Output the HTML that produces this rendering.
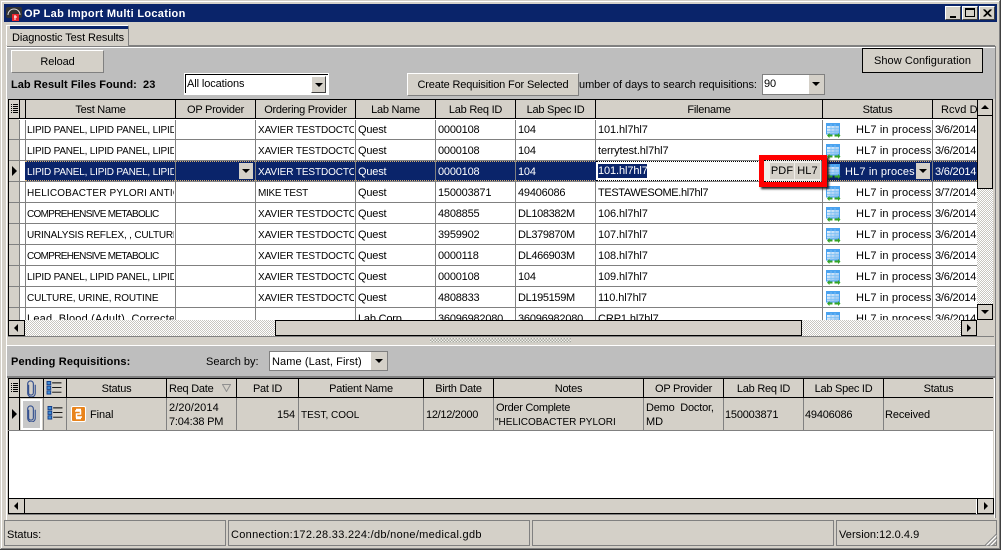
<!DOCTYPE html>
<html><head><meta charset="utf-8">
<style>
html,body{margin:0;padding:0;width:1001px;height:550px;overflow:hidden;background:#d4d0c8}
body{position:relative;font:11px/14px "Liberation Sans",sans-serif;letter-spacing:-.1px;color:#000}
div,span.a{position:absolute;box-sizing:border-box}
.t{position:absolute;white-space:pre;overflow:hidden;margin-top:1px}
.h{position:absolute;text-align:center;white-space:pre;overflow:hidden;top:0;height:18px;line-height:20px;letter-spacing:-.25px}
.btn{background:#d4d0c8;text-align:center;white-space:pre}
.raised{border:1px solid;border-color:#fff #808080 #808080 #fff}
.r{left:0;width:1001px;height:20px;line-height:20px}
.r .t{height:20px;margin-top:0}
.c1{left:27px;width:147px;font-size:10px;letter-spacing:-.2px}.c2{left:177px;width:76px}.c3{left:258px;width:96px;font-size:10px;letter-spacing:-.1px}.c4{left:358px;width:76px;letter-spacing:-.2px}
.r .c1,.r .c3{margin-top:1px}
.c5{left:438px;width:76px;letter-spacing:-.2px}.c6{left:518px;width:76px;letter-spacing:-.2px}.c7{left:598px;width:222px;letter-spacing:-.1px}.c8{left:856px;width:75px;letter-spacing:.15px}.c9{left:935px;width:42px;letter-spacing:-.2px}
.ic{position:absolute;left:826px;top:3px;width:15px;height:15px}
.v{top:0;width:1px;background:#808080}
.dn{width:0;height:0;border-left:4px solid transparent;border-right:4px solid transparent;border-top:4px solid #000}
.lt{width:0;height:0;border-top:4px solid transparent;border-bottom:4px solid transparent;border-right:4px solid #000}
.rt{width:0;height:0;border-top:4px solid transparent;border-bottom:4px solid transparent;border-left:4px solid #000}
.dither{background:repeating-conic-gradient(#c8c6c0 0 25%,#fff 0 50%) 0 0/2px 2px}
.b2{border:2px solid #000;background:#d4d0c8}
</style></head><body>
<svg width="0" height="0" style="position:absolute"><defs>
<linearGradient id="gf" x1="0" y1="0" x2="1" y2="1"><stop offset="0" stop-color="#ffffff"/><stop offset="1" stop-color="#7fb8ee"/></linearGradient>
<symbol id="gr" viewBox="0 0 15 15">
<rect x=".5" y=".5" width="13" height="10.500" fill="url(#gf)" stroke="#4aa3f0"/><rect x="1" y="1" width="12" height="2" fill="#4aa3f0"/>
<path d="M5 1v10M9 1v10M1 5.500h12M1 8.500h12" stroke="#7cc0f5" stroke-width=".8"/>
<path d="M1 12.500l2.500-2.500v1.500h3v2h-3V15zM14.500 12.500l-2.500-2.500v1.500H8.500v2H12V15z" fill="#35a426"/></symbol>
<symbol id="clip" viewBox="0 0 12 18"><path d="M3.500 5v8.500a2.500 2.500 0 0 0 5 0V4a3 3 0 0 0-6 0v10a4 4 0 0 0 8 0V5" fill="none" stroke="#34508f" stroke-width="1.200"/></symbol>
<symbol id="list" viewBox="0 0 16 15"><rect x=".5" y=".5" width="4" height="3.500" fill="#3f8fd8" stroke="#123a88"/><rect x=".5" y="5.500" width="4" height="3.500" fill="#3f8fd8" stroke="#123a88"/><rect x=".5" y="10.500" width="4" height="3.500" fill="#3f8fd8" stroke="#123a88"/><path d="M6 2h10M6 7h10M6 12h10" stroke="#000"/></symbol>
<symbol id="mini" viewBox="0 0 7 9"><path d="M0 .5h1M0 2.500h1M0 4.500h1M0 6.500h1M0 8.500h1M2 .5h5M2 2.500h5M2 4.500h5M2 6.500h5M2 8.500h5" stroke="#000"/></symbol>
</defs></svg>

<!-- window frame -->
<div style="left:1px;top:1px;width:999px;height:1px;background:#fff"></div>
<div style="left:1px;top:1px;width:1px;height:548px;background:#fff"></div>
<div style="left:1000px;top:0;width:1px;height:550px;background:#404040"></div>
<div style="left:999px;top:1px;width:1px;height:548px;background:#808080"></div>
<div style="left:0;top:549px;width:1001px;height:1px;background:#404040"></div>
<div style="left:1px;top:548px;width:999px;height:1px;background:#808080"></div>
<!-- title -->
<div style="left:4px;top:4px;width:993px;height:18px;background:#0a246a"></div>
<svg style="position:absolute;left:6px;top:6px" width="16" height="15" viewBox="0 0 16 15"><rect x="0" y="1" width="16" height="11" rx="2" fill="#333"/><path d="M2 9a6 6 0 0 1 12 0" fill="none" stroke="#ddd"/><rect x="6" y="8" width="7" height="7" fill="#e8242c"/><path d="M9 9v5M8 11h3" stroke="#fff"/></svg>
<div class="t" style="left:24px;top:6px;color:#fff;font-weight:bold;font-size:11px;letter-spacing:.3px">OP Lab Import Multi Location</div>
<div class="raised btn" style="left:945px;top:6px;width:16px;height:14px;border-color:#fff #404040 #404040 #fff"><div style="left:4px;top:9px;width:6px;height:2px;background:#000"></div></div>
<div class="raised btn" style="left:962px;top:6px;width:16px;height:14px;border-color:#fff #404040 #404040 #fff"><div style="left:2px;top:1px;width:10px;height:9px;border:1px solid #000;border-top-width:2px"></div></div>
<div class="raised btn" style="left:979px;top:6px;width:16px;height:14px;border-color:#fff #404040 #404040 #fff"><svg style="position:absolute;left:3px;top:2px" width="9" height="8"><path d="M0.500 0.500l7 7M1.500 0.500l7 7M7.500 0.500l-7 7M8.500 0.500l-7 7" stroke="#000"/></svg></div>

<!-- tab -->
<div style="left:6px;top:25px;width:123px;height:21px;background:#d4d0c8;border:1px solid;border-color:#fff #808080 #d4d0c8 #fff"></div>
<div style="left:10px;top:26px;width:118px;height:3px;background:#0a246a"></div>
<div class="t" style="left:12px;top:30px;letter-spacing:-.09px">Diagnostic Test Results</div>
<!-- main panel -->
<div style="left:6px;top:46px;width:990px;height:1px;background:#808080"></div>
<div style="left:128px;top:45px;width:867px;height:1px;background:#808080"></div>
<div style="left:6px;top:46px;width:1px;height:474px;background:#fff"></div>
<div style="left:995px;top:46px;width:1px;height:472px;background:#808080"></div>
<div style="left:7px;top:47px;width:988px;height:52px;background:#bebebe"></div>
<div style="left:7px;top:47px;width:988px;height:1px;background:#fff"></div>

<div class="btn raised" style="left:11px;top:50px;width:93px;height:23px;line-height:22px">Reload</div>
<div class="t" style="left:11px;top:77px;font-weight:bold;font-size:11px;letter-spacing:.05px">Lab Result Files Found:&nbsp; 23</div>
<div style="left:184px;top:73px;width:145px;height:22px;background:#fff"></div>
<div style="left:185px;top:74px;width:143px;height:1px;background:#000"></div><div style="left:185px;top:74px;width:1px;height:19px;background:#000"></div>
<div class="t" style="left:187px;top:76px">All locations</div>
<div class="btn" style="left:311px;top:76px;width:15px;height:17px;border:1px solid;border-color:#fff #404040 #404040 #fff"><div class="dn" style="left:3px;top:6px"></div></div>
<div class="btn raised" style="left:407px;top:73px;width:172px;height:23px;line-height:22px;letter-spacing:-.16px">Create Requisition For Selected</div>
<div class="t" style="left:579px;top:77px;width:180px;letter-spacing:-.05px">umber of days to search requisitions:</div>
<div style="left:762px;top:74px;width:63px;height:21px;background:#fff;border:1px solid #808080"></div>
<div class="t" style="left:764px;top:76px">90</div>
<div class="btn" style="left:809px;top:75px;width:15px;height:19px"><div class="dn" style="left:3px;top:7px"></div></div>
<div class="btn" style="left:862px;top:48px;width:121px;height:25px;border:1px solid #000;line-height:25px;letter-spacing:.06px">Show Configuration</div>

<!-- GRID 1 -->
<div style="left:8px;top:99px;width:985px;height:221px;background:#fff"></div>
<div style="left:8px;top:99px;width:985px;height:1px;background:#000"></div>
<div style="left:8px;top:99px;width:1px;height:238px;background:#000"></div>
<div style="left:9px;top:100px;width:968px;height:18px;background:#d4d0c8"></div>
<div style="left:8px;top:118px;width:969px;height:1px;background:#000"></div>
<div style="left:9px;top:119px;width:10px;height:201px;background:#d4d0c8"></div>
<div style="left:8px;top:100px;width:0;height:18px">
<div class="v" style="left:11px;height:18px;background:#000"></div>
<div class="v" style="left:17px;height:18px;background:#000"></div>
<div class="h" style="left:18px;width:149px">Test Name</div>
<div class="v" style="left:167px;height:18px;background:#000"></div>
<div class="h" style="left:168px;width:79px">OP Provider</div>
<div class="v" style="left:247px;height:18px;background:#000"></div>
<div class="h" style="left:248px;width:99px">Ordering Provider</div>
<div class="v" style="left:347px;height:18px;background:#000"></div>
<div class="h" style="left:348px;width:79px">Lab Name</div>
<div class="v" style="left:427px;height:18px;background:#000"></div>
<div class="h" style="left:428px;width:79px">Lab Req ID</div>
<div class="v" style="left:507px;height:18px;background:#000"></div>
<div class="h" style="left:508px;width:79px">Lab Spec ID</div>
<div class="v" style="left:587px;height:18px;background:#000"></div>
<div class="h" style="left:588px;width:226px">Filename</div>
<div class="v" style="left:814px;height:18px;background:#000"></div>
<div class="h" style="left:815px;width:109px">Status</div>
<div class="v" style="left:924px;height:18px;background:#000"></div>
<div class="h" style="left:925px;width:44px;text-align:left;padding-left:8px;letter-spacing:.1px">Rcvd Date</div>
</div>
<svg style="position:absolute;left:11px;top:104px" width="7" height="9"><use href="#mini"/></svg>

<!-- grid 1 body clipped -->
<div style="left:0;top:120px;width:977px;height:200px;overflow:hidden">
<div style="left:0;top:-1px;width:977px;height:201px">
<div class="v" style="left:19px;height:201px;background:#808080"></div>
<div class="v" style="left:25px;height:201px"></div><div class="v" style="left:175px;height:201px"></div><div class="v" style="left:255px;height:201px"></div><div class="v" style="left:355px;height:201px"></div><div class="v" style="left:435px;height:201px"></div><div class="v" style="left:515px;height:201px"></div><div class="v" style="left:595px;height:201px"></div><div class="v" style="left:822px;height:201px"></div><div class="v" style="left:932px;height:201px"></div>
<div style="left:9px;top:20px;width:968px;height:1px;background:#808080"></div>
<div style="left:9px;top:41px;width:968px;height:1px;background:#808080"></div>
<div style="left:9px;top:62px;width:968px;height:1px;background:#808080"></div>
<div style="left:9px;top:83px;width:968px;height:1px;background:#808080"></div>
<div style="left:9px;top:104px;width:968px;height:1px;background:#808080"></div>
<div style="left:9px;top:125px;width:968px;height:1px;background:#808080"></div>
<div style="left:9px;top:146px;width:968px;height:1px;background:#808080"></div>
<div style="left:9px;top:167px;width:968px;height:1px;background:#808080"></div>
<div style="left:9px;top:188px;width:968px;height:1px;background:#808080"></div>

<div class="r" style="top:1px"><span class="t c1">LIPID PANEL, LIPID PANEL, LIPID</span><span class="t c3">XAVIER TESTDOCTOR</span><span class="t c4">Quest</span><span class="t c5">0000108</span><span class="t c6">104</span><span class="t c7">101.hl7hl7</span><svg class="ic"><use href="#gr"/></svg><span class="t c8">HL7 in process</span><span class="t c9">3/6/2014</span></div>
<div class="r" style="top:22px"><span class="t c1">LIPID PANEL, LIPID PANEL, LIPID</span><span class="t c3">XAVIER TESTDOCTOR</span><span class="t c4">Quest</span><span class="t c5">0000108</span><span class="t c6">104</span><span class="t c7">terrytest.hl7hl7</span><svg class="ic"><use href="#gr"/></svg><span class="t c8">HL7 in process</span><span class="t c9">3/6/2014</span></div>
<div class="r" style="top:64px"><span class="t c1" style="letter-spacing:.15px">HELICOBACTER PYLORI ANTIGEN</span><span class="t c3" style="letter-spacing:-.3px">MIKE TEST</span><span class="t c4">Quest</span><span class="t c5">150003871</span><span class="t c6">49406086</span><span class="t c7" style="letter-spacing:-.37px">TESTAWESOME.hl7hl7</span><svg class="ic"><use href="#gr"/></svg><span class="t c8">HL7 in process</span><span class="t c9">3/7/2014</span></div>
<div class="r" style="top:85px"><span class="t c1" style="letter-spacing:-.7px">COMPREHENSIVE METABOLIC</span><span class="t c3">XAVIER TESTDOCTOR</span><span class="t c4">Quest</span><span class="t c5">4808855</span><span class="t c6" style="letter-spacing:-.35px">DL108382M</span><span class="t c7">106.hl7hl7</span><svg class="ic"><use href="#gr"/></svg><span class="t c8">HL7 in process</span><span class="t c9">3/6/2014</span></div>
<div class="r" style="top:106px"><span class="t c1">URINALYSIS REFLEX, , CULTURE</span><span class="t c3">XAVIER TESTDOCTOR</span><span class="t c4">Quest</span><span class="t c5">3959902</span><span class="t c6" style="letter-spacing:-.35px">DL379870M</span><span class="t c7">107.hl7hl7</span><svg class="ic"><use href="#gr"/></svg><span class="t c8">HL7 in process</span><span class="t c9">3/6/2014</span></div>
<div class="r" style="top:127px"><span class="t c1" style="letter-spacing:-.7px">COMPREHENSIVE METABOLIC</span><span class="t c3">XAVIER TESTDOCTOR</span><span class="t c4">Quest</span><span class="t c5">0000118</span><span class="t c6" style="letter-spacing:-.35px">DL466903M</span><span class="t c7">108.hl7hl7</span><svg class="ic"><use href="#gr"/></svg><span class="t c8">HL7 in process</span><span class="t c9">3/6/2014</span></div>
<div class="r" style="top:148px"><span class="t c1">LIPID PANEL, LIPID PANEL, LIPID</span><span class="t c3">XAVIER TESTDOCTOR</span><span class="t c4">Quest</span><span class="t c5">0000108</span><span class="t c6">104</span><span class="t c7">109.hl7hl7</span><svg class="ic"><use href="#gr"/></svg><span class="t c8">HL7 in process</span><span class="t c9">3/6/2014</span></div>
<div class="r" style="top:169px"><span class="t c1" style="letter-spacing:-.1px">CULTURE, URINE, ROUTINE</span><span class="t c3">XAVIER TESTDOCTOR</span><span class="t c4">Quest</span><span class="t c5">4808833</span><span class="t c6" style="letter-spacing:-.35px">DL195159M</span><span class="t c7">110.hl7hl7</span><svg class="ic"><use href="#gr"/></svg><span class="t c8">HL7 in process</span><span class="t c9">3/6/2014</span></div>
<div class="r" style="top:190px"><span class="t c1" style="font-size:11px;letter-spacing:.2px;margin-top:0">Lead, Blood (Adult), Corrected</span><span class="t c4">Lab Corp</span><span class="t c5">36096982080</span><span class="t c6">36096982080</span><span class="t c7">CRP1.hl7hl7</span><svg class="ic"><use href="#gr"/></svg><span class="t c8">HL7 in process</span><span class="t c9">3/6/2014</span></div>

<!-- selected -->
<div style="left:25px;top:42px;width:952px;height:20px;background:#0a246a;border-top:1px dotted #d8b070;border-bottom:1px dotted #d8b070"></div>
<div class="v" style="left:175px;top:42px;height:20px"></div><div class="v" style="left:255px;top:42px;height:20px"></div><div class="v" style="left:355px;top:42px;height:20px"></div><div class="v" style="left:435px;top:42px;height:20px"></div><div class="v" style="left:515px;top:42px;height:20px"></div><div class="v" style="left:932px;top:42px;height:20px"></div>
<div class="r" style="top:43px;color:#fff"><span class="t c1">LIPID PANEL, LIPID PANEL, LIPID</span><span class="t c3">XAVIER TESTDOCTOR</span><span class="t c4">Quest</span><span class="t c5">0000108</span><span class="t c6">104</span><span class="t" style="left:845px;width:70px;letter-spacing:.15px">HL7 in process</span><span class="t c9">3/6/2014</span></div>
<div class="btn" style="left:239px;top:44px;width:14px;height:16px"><div class="dn" style="left:3px;top:6px"></div></div>
<div class="btn" style="left:916px;top:44px;width:14px;height:16px"><div class="dn" style="left:3px;top:6px"></div></div>
<div style="left:596px;top:42px;width:226px;height:20px;background:#fff;border-top:1px dotted #000;border-bottom:1px dotted #000"></div>
<div class="t" style="left:598px;top:44px;width:49px;height:14px;background:#0a246a;color:#fff;letter-spacing:-.1px">101.hl7hl7</div>
<svg class="ic" style="top:45px"><use href="#gr"/></svg>
<div class="rt" style="left:12px;top:47px;border-top-width:5px;border-bottom-width:5px;border-left-width:5px"></div>
</div>
</div>

<!-- red highlight -->
<div style="left:759px;top:155px;width:68px;height:32px;border:5px solid #f00;background:#fff;box-shadow:2px 2px 2px #222"></div>
<div style="left:764px;top:160px;width:58px;height:22px;border-top:1px dotted #000;border-bottom:1px dotted #000;border-right:1px solid #808080;background:#eeece8"></div>
<div class="btn" style="left:770px;top:163px;width:24px;height:16px;line-height:17px;background:#d4d0c8;letter-spacing:.1px">PDF</div>
<div class="btn" style="left:795px;top:163px;width:25px;height:16px;line-height:17px;background:#d4d0c8;letter-spacing:.1px">HL7</div>

<!-- v scrollbar grid 1 -->
<div class="dither" style="left:977px;top:99px;width:16px;height:221px"></div>
<div class="b2" style="left:977px;top:99px;width:16px;height:17px;border-width:1px"><div class="dn" style="left:3px;top:5px;border-top:0;border-bottom:4px solid #000"></div></div>
<div class="b2" style="left:977px;top:115px;width:16px;height:74px;border-width:1px"></div>
<div class="b2" style="left:977px;top:304px;width:16px;height:16px;border-width:1px"><div class="dn" style="left:3px;top:5px"></div></div>
<!-- h scrollbar grid 1 -->
<div class="dither" style="left:9px;top:320px;width:968px;height:16px"></div>
<div class="b2" style="left:8px;top:320px;width:17px;height:16px;border-width:1px"><div class="lt" style="left:5px;top:3px"></div></div>
<div class="b2" style="left:275px;top:320px;width:527px;height:16px;border-width:1px"></div>
<div class="b2" style="left:961px;top:320px;width:16px;height:16px;border-width:1px"><div class="rt" style="left:5px;top:3px"></div></div>
<div style="left:977px;top:320px;width:16px;height:16px;background:#d4d0c8"></div>
<div style="left:8px;top:336px;width:986px;height:1px;background:#808080"></div>

<!-- splitter -->
<div style="left:7px;top:337px;width:988px;height:8px;background:#d4d0c8"></div>
<div style="left:430px;top:338px;width:141px;height:5px;background:repeating-conic-gradient(#a8a8a0 0 25%,#eeeee8 0 50%) 0 0/3px 3px"></div>
<div style="left:7px;top:345px;width:988px;height:1px;background:#fff"></div>

<!-- pending panel -->
<div style="left:7px;top:346px;width:988px;height:30px;background:#bebebe"></div>
<div style="left:7px;top:376px;width:988px;height:2px;background:#808080"></div>
<div class="t" style="left:11px;top:354px;font-weight:bold;letter-spacing:.16px">Pending Requisitions:</div>
<div class="t" style="left:206px;top:354px;letter-spacing:0">Search by:</div>
<div style="left:269px;top:351px;width:119px;height:20px;background:#fff;border:1px solid #808080"></div>
<div class="t" style="left:272px;top:354px;letter-spacing:.1px">Name (Last, First)</div>
<div class="btn" style="left:371px;top:352px;width:16px;height:18px"><div class="dn" style="left:4px;top:7px"></div></div>

<!-- GRID 2 -->
<div style="left:8px;top:378px;width:985px;height:120px;background:#fff"></div>
<div style="left:8px;top:378px;width:985px;height:1px;background:#000"></div>
<div style="left:8px;top:378px;width:1px;height:136px;background:#000"></div>
<div style="left:9px;top:379px;width:984px;height:18px;background:#d4d0c8"></div>
<div style="left:9px;top:398px;width:984px;height:32px;background:#d4d0c8"></div>
<div style="left:8px;top:397px;width:985px;height:1px;background:#000"></div>
<div style="left:8px;top:430px;width:985px;height:1px;background:#808080"></div>
<div style="left:0;top:379px;width:0;height:18px">
<div class="v" style="left:19px;height:18px;background:#000"></div>
<div class="v" style="left:43px;height:18px;background:#000"></div>
<div class="v" style="left:66px;height:18px;background:#000"></div>
<div class="h" style="left:67px;width:99px">Status</div>
<div class="v" style="left:166px;height:18px;background:#000"></div>
<div class="h" style="left:169px;width:60px;text-align:left">Req Date</div>
<div class="v" style="left:236px;height:18px;background:#000"></div>
<div class="h" style="left:237px;width:61px">Pat ID</div>
<div class="v" style="left:298px;height:18px;background:#000"></div>
<div class="h" style="left:299px;width:124px">Patient Name</div>
<div class="v" style="left:423px;height:18px;background:#000"></div>
<div class="h" style="left:424px;width:69px">Birth Date</div>
<div class="v" style="left:493px;height:18px;background:#000"></div>
<div class="h" style="left:494px;width:149px">Notes</div>
<div class="v" style="left:643px;height:18px;background:#000"></div>
<div class="h" style="left:644px;width:79px">OP Provider</div>
<div class="v" style="left:723px;height:18px;background:#000"></div>
<div class="h" style="left:724px;width:79px">Lab Req ID</div>
<div class="v" style="left:803px;height:18px;background:#000"></div>
<div class="h" style="left:804px;width:79px">Lab Spec ID</div>
<div class="v" style="left:883px;height:18px;background:#000"></div>
<div class="h" style="left:884px;width:109px">Status</div>
</div>
<svg style="position:absolute;left:25px;top:380px" width="12" height="17"><use href="#clip"/></svg>
<svg style="position:absolute;left:11px;top:383px" width="7" height="9"><use href="#mini"/></svg>
<svg style="position:absolute;left:46px;top:381px" width="16" height="14"><use href="#list"/></svg>
<svg style="position:absolute;left:222px;top:384px" width="9" height="8"><path d="M.5.5h8L4.500 7.500z" fill="none" stroke="#909090"/></svg>
<!-- grid 2 row -->
<div style="left:0;top:398px;width:0;height:32px">
<div class="v" style="left:19px;height:32px;background:#000"></div>
<div class="v" style="left:43px;height:32px"></div><div class="v" style="left:66px;height:32px"></div><div class="v" style="left:166px;height:32px"></div><div class="v" style="left:236px;height:32px"></div><div class="v" style="left:298px;height:32px"></div><div class="v" style="left:423px;height:32px"></div><div class="v" style="left:493px;height:32px"></div><div class="v" style="left:643px;height:32px"></div><div class="v" style="left:723px;height:32px"></div><div class="v" style="left:803px;height:32px"></div><div class="v" style="left:883px;height:32px"></div>
</div>
<div class="rt" style="left:12px;top:409px;border-top-width:5px;border-bottom-width:5px;border-left-width:5px"></div>
<div style="left:21px;top:399px;width:21px;height:31px;background:#c8c8c8;border:2px solid #fff"></div>
<svg style="position:absolute;left:25px;top:405px" width="12" height="17"><use href="#clip"/></svg>
<svg style="position:absolute;left:47px;top:406px" width="16" height="14"><use href="#list"/></svg>
<div style="left:71px;top:406px;width:15px;height:16px;background:#e9841c;border:1px solid #fff;border-radius:2px"></div>
<svg style="position:absolute;left:74px;top:408px" width="9" height="12"><path d="M1 3h5.500V6H2.500V9H8M2 1.500h5M2 10.500h5" fill="none" stroke="#fff" stroke-width="1.500"/></svg>
<div class="t" style="left:90px;top:407px">Final</div>
<div class="t" style="left:169px;top:400px;letter-spacing:.1px">2/20/2014</div>
<div class="t" style="left:169px;top:414px;letter-spacing:-.2px">7:04:38 PM</div>
<div class="t" style="left:237px;top:407px;width:58px;text-align:right">154</div>
<div class="t" style="left:301px;top:408px;font-size:10px;letter-spacing:0">TEST, COOL</div>
<div class="t" style="left:426px;top:407px;letter-spacing:-.3px">12/12/2000</div>
<div class="t" style="left:496px;top:400px;letter-spacing:-.3px">Order Complete</div>
<div class="t" style="left:495px;top:415px;width:147px;font-size:10px;letter-spacing:0">"HELICOBACTER PYLORI</div>
<div class="t" style="left:646px;top:400px;letter-spacing:-.2px">Demo&nbsp; Doctor,</div>
<div class="t" style="left:646px;top:414px">MD</div>
<div class="t" style="left:725px;top:407px;letter-spacing:-.2px">150003871</div>
<div class="t" style="left:805px;top:407px;letter-spacing:-.2px">49406086</div>
<div class="t" style="left:885px;top:407px;letter-spacing:-.1px">Received</div>
<!-- h scrollbar grid 2 -->
<div style="left:8px;top:498px;width:985px;height:1px;background:#000"></div>
<div style="left:9px;top:499px;width:984px;height:15px;background:#d4d0c8"></div>
<div style="left:8px;top:513px;width:985px;height:1px;background:#000"></div>
<div style="left:24px;top:499px;width:1px;height:15px;background:#000"></div>
<div class="lt" style="left:14px;top:502px"></div>
<div style="left:976px;top:499px;width:1px;height:15px;background:#fff"></div>
<div style="left:977px;top:499px;width:1px;height:15px;background:#000"></div>
<div class="rt" style="left:984px;top:502px"></div>
<div style="left:993px;top:498px;width:1px;height:16px;background:#000"></div>
<div style="left:994px;top:378px;width:1px;height:140px;background:#fff"></div>
<div style="left:8px;top:514px;width:986px;height:1px;background:#808080"></div>

<!-- status bar -->
<div style="left:4px;top:520px;width:222px;height:26px;border:1px solid #808080"></div>
<div class="t" style="left:7px;top:527px;letter-spacing:0">Status:</div>
<div style="left:228px;top:520px;width:302px;height:26px;border:1px solid #808080"></div>
<div class="t" style="left:231px;top:527px;letter-spacing:.3px">Connection:172.28.33.224:/db/none/medical.gdb</div>
<div style="left:532px;top:520px;width:302px;height:26px;border:1px solid #808080"></div>
<div style="left:836px;top:520px;width:161px;height:26px;border:1px solid #808080"></div>
<div class="t" style="left:839px;top:527px;letter-spacing:.05px">Version:12.0.4.9</div>
<svg style="position:absolute;left:984px;top:533px" width="13" height="13"><path d="M12.500 1L1 12.500M12.500 5L5 12.500M12.500 9L9 12.500" stroke="#808080"/><path d="M12.500 2.500L2.500 12.500M12.500 6.500L6.500 12.500" stroke="#fff"/></svg>
</body></html>
